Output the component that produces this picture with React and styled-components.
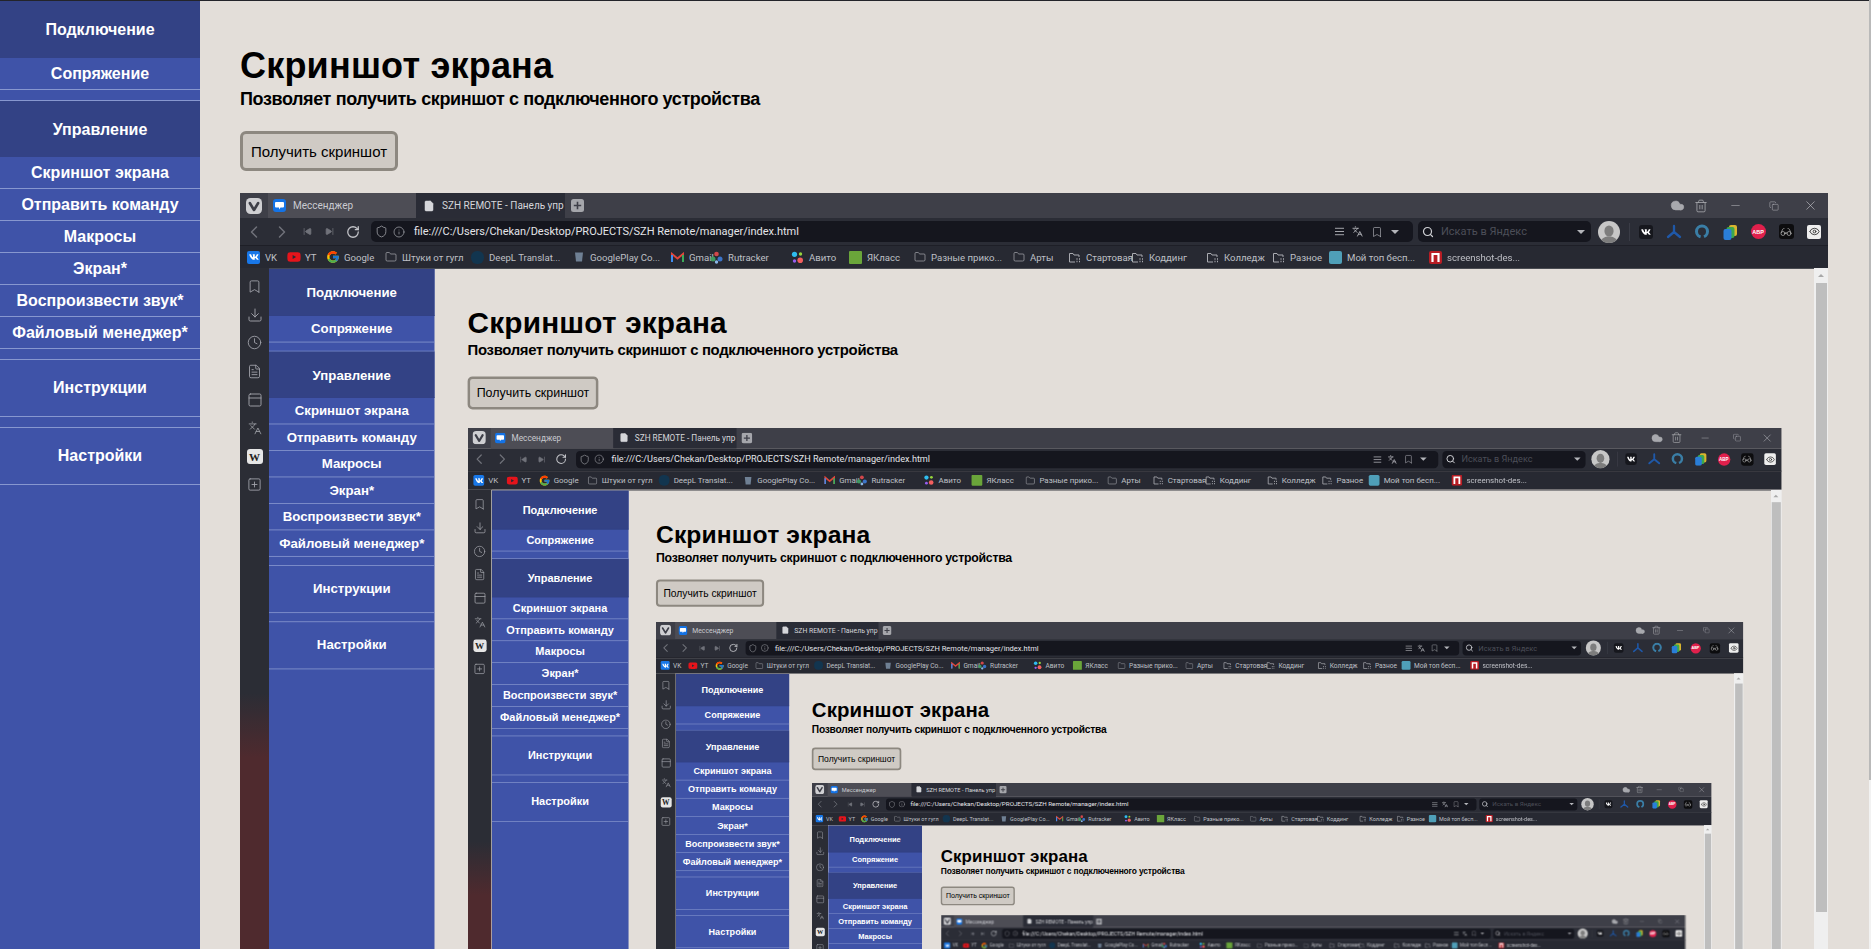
import React from 'react';
import styled, { createGlobalStyle } from 'styled-components';
import { Bookmark, Download, Clock, FileText, PanelTop, SquarePlus, Folder, Shield, Info, RotateCw, ChevronLeft, ChevronRight, SkipBack, SkipForward, Search, Cloud, Trash2, Minus, Copy, X, Eye, Glasses, AlignJustify, Languages, File } from 'lucide-react';
import { FaVk, FaYoutube } from 'react-icons/fa';
import { FcGoogle } from 'react-icons/fc';

const SCALE = 0.8275;
const MAX_DEPTH = 6;

const Global = createGlobalStyle`
  html, body { margin: 0; padding: 0; width: 100%; height: 100%; overflow: hidden; background: #e3ded9; }
  #root { width: 1871px; height: 949px; }
  * { box-sizing: border-box; }
  svg { flex: none; }
`;

const Screen = styled.div`
  display: flex;
  width: 1871px;
  height: 949px;
  overflow: hidden;
`;

const EdgeStrip = styled.div`
  flex: none;
  width: 2px;
  background: linear-gradient(#b9b9b9 780px, #f2f2f2 780px);
`;

const Page = styled.div`
  flex: none;
  display: flex;
  width: ${p => (p.$nested ? '1871px' : '1869px')};
  height: 949px;
  overflow: hidden;
  background: #e3ded9;
  border-top: 1px solid ${p => (p.$nested ? '#2b2d36' : '#23242a')};
  font-family: "Liberation Sans", Arial, sans-serif;
  transform: ${p => (p.$nested ? `scale(${SCALE})` : 'none')};
  transform-origin: 0 0;
`;

const Sidebar = styled.nav`
  flex: none;
  width: 200px;
  background: #3f53a8;
  display: flex;
  flex-direction: column;
`;

const NavItem = styled.div`
  flex: none;
  height: ${p => p.$h || 32}px;
  padding-top: ${p => (p.$dark ? 2 : 0)}px;
  display: flex;
  align-items: center;
  justify-content: center;
  font-size: 16px;
  font-weight: 700;
  color: #fff;
  white-space: nowrap;
  background: ${p => (p.$dark ? '#334285' : 'transparent')};
  border-bottom: 1px solid ${p => (p.$dark ? '#334285' : '#8797cf')};
`;

const NavGap = styled.div`
  flex: none;
  height: 11px;
  border-bottom: 1px solid #8797cf;
`;

const Main = styled.main`
  flex: 1;
  min-width: 0;
  padding: ${p => (p.$nested ? '43.5px' : '44px')} 0 0 40px;
  display: flex;
  flex-direction: column;
  align-items: flex-start;
`;

const Title = styled.h1`
  margin: 0 0 3px;
  font-size: 36px;
  line-height: 41px;
  font-weight: 700;
  letter-spacing: 0.2px;
  color: #000;
`;

const Subtitle = styled.h2`
  margin: 0 0 21px;
  font-size: 18px;
  line-height: 21px;
  font-weight: 700;
  letter-spacing: -0.39px;
  color: #000;
`;

const ActionButton = styled.button`
  flex: none;
  width: 158px;
  height: 40px;
  margin-bottom: 22px;
  padding: 0;
  border: 3px solid #8d8880;
  border-radius: 6px;
  background: #cfcac4;
  color: #000;
  font-family: "Liberation Sans", Arial, sans-serif;
  font-size: 15px;
`;

const Shot = styled.div`
  flex: none;
  width: 1588px;
  height: 805px;
  overflow: hidden;
  display: flex;
  flex-direction: column;
  filter: blur(${p => p.$blur}px);
  font-family: Roboto, "Noto Sans", sans-serif;
`;

const TabStrip = styled.div`
  flex: none;
  height: 25px;
  display: flex;
  align-items: stretch;
  background: #3e3f48;
`;

const Cell = styled.div`
  flex: none;
  width: ${p => p.$w}px;
  margin-left: ${p => p.$ml || 0}px;
  display: flex;
  align-items: center;
  justify-content: center;
  color: ${p => p.$color || '#8f9097'};
`;

const Tab = styled.div`
  flex: none;
  width: ${p => p.$w}px;
  display: flex;
  align-items: center;
  gap: 7px;
  padding-left: ${p => p.$pad}px;
  white-space: nowrap;
  font-size: 10px;
  color: ${p => (p.$active ? '#d5d6da' : '#c9cad0')};
  background: ${p => (p.$active ? '#2a2c36' : '#4d4d55')};
`;

const PushRight = styled.div`
  flex: 1;
`;

const AddressBar = styled.div`
  flex: none;
  height: 28px;
  display: flex;
  align-items: center;
  background: #2b2d36;
  border-bottom: 1px solid #1e1f27;
`;

const Field = styled.div`
  flex: none;
  width: ${p => p.$w}px;
  height: 21px;
  margin-left: 5px;
  border-radius: 5px;
  background: #15161e;
  display: flex;
  align-items: center;
  white-space: nowrap;
  color: #e4e5e9;
  font-size: 11px;
`;

const FieldIcon = styled.span`
  flex: none;
  width: ${p => p.$w}px;
  display: flex;
  align-items: center;
  justify-content: center;
  color: ${p => p.$color || '#b2b3b9'};
`;

const Url = styled.span`
  flex: 1;
`;

const Muted = styled.span`
  flex: 1;
  color: #4c4e58;
`;

const Caret = styled.span`
  width: 0;
  height: 0;
  border-left: 4px solid transparent;
  border-right: 4px solid transparent;
  border-top: 4px solid #b4b5ba;
`;

const Avatar = styled.div`
  flex: none;
  width: 22px;
  height: 22px;
  margin-left: 7px;
  border-radius: 50%;
  background: #c7c7c7;
  overflow: hidden;
  display: flex;
  align-items: flex-end;
  justify-content: center;
`;

const Rule = styled.div`
  flex: none;
  width: 1px;
  height: 18px;
  margin: 0 2px 0 9px;
  background: #3a3c46;
`;

const AbpBadge = styled.div`
  width: 15px;
  height: 15px;
  border-radius: 50%;
  background: #e0204c;
  color: #fff;
  font: 700 5.5px "Liberation Sans", sans-serif;
  display: flex;
  align-items: center;
  justify-content: center;
`;

const Square = styled.div`
  width: ${p => p.$size || 13}px;
  height: ${p => p.$size || 13}px;
  border-radius: ${p => p.$radius ?? 2}px;
  background: ${p => p.$bg};
  color: ${p => p.$fg || '#fff'};
  display: flex;
  align-items: center;
  justify-content: center;
`;

const BookmarkBar = styled.div`
  flex: none;
  height: 22px;
  display: flex;
  align-items: center;
  padding-left: 7px;
  background: #272932;
`;

const Mark = styled.div`
  flex: none;
  width: ${p => p.$w}px;
  display: flex;
  align-items: center;
  gap: 5px;
  white-space: nowrap;
  font-size: 9.6px;
  color: #bfc0c6;
`;

const MarkIcon = styled.span`
  flex: none;
  width: 13px;
  height: 13px;
  display: flex;
  align-items: center;
  justify-content: center;
  color: #a9aab0;
`;

const ShotBody = styled.div`
  flex: 1;
  min-height: 0;
  display: flex;
`;

const ToolPanel = styled.aside`
  flex: none;
  width: 29px;
  padding-top: 4px;
  display: flex;
  flex-direction: column;
  background: linear-gradient(#2b2d35 425px, #4f2a2e 490px);
  color: #a2a4ab;
`;

const ToolCell = styled.div`
  flex: none;
  height: 28.4px;
  display: flex;
  align-items: center;
  justify-content: center;
`;

const WikiBadge = styled.div`
  width: 16px;
  height: 15px;
  border-radius: 3px;
  background: #e6e6e6;
  color: #222;
  font: 700 11px "Liberation Serif", serif;
  display: flex;
  align-items: center;
  justify-content: center;
`;

const PageClip = styled.div`
  flex: 1;
  min-width: 0;
  overflow: hidden;
  background: #e3ded9;
`;

const Scrollbar = styled.div`
  flex: none;
  width: 14px;
  display: flex;
  flex-direction: column;
  align-items: center;
  background: #efefef;
`;

const ScrollArrow = styled.div`
  flex: none;
  height: 15px;
  display: flex;
  align-items: center;
  justify-content: center;
  &::before {
    content: "";
    border-left: 3px solid transparent;
    border-right: 3px solid transparent;
    border-bottom: 3px solid #a8a8a8;
  }
`;

const ScrollThumb = styled.div`
  flex: none;
  width: 11px;
  height: 629px;
  background: #bebebe;
`;

const Vivaldi = () => (
  <svg width="16" height="16" viewBox="0 0 16 16">
    <rect width="16" height="16" rx="4.5" fill="#cfcfd2" />
    <path d="M3.8 5 L8 12 L12.2 5" fill="none" stroke="#3e3f48" strokeWidth="2.6" strokeLinecap="round" strokeLinejoin="round" />
  </svg>
);

const Messenger = () => (
  <svg width="13" height="13" viewBox="0 0 13 13">
    <rect width="13" height="13" rx="3" fill="#1473e6" />
    <path d="M3 3h7a1 1 0 0 1 1 1v3.5a1 1 0 0 1-1 1H7.5L6 10.5V8.5H3a1 1 0 0 1-1-1V4a1 1 0 0 1 1-1z" fill="#fff" />
  </svg>
);

const AddTab = () => (
  <svg width="13" height="13" viewBox="0 0 13 13">
    <rect width="13" height="13" rx="2.5" fill="#a5a6ab" />
    <path d="M6.5 2.8v7.4M2.8 6.5h7.4" stroke="#3e3f48" strokeWidth="1.6" />
  </svg>
);

const Person = () => (
  <svg width="18" height="19" viewBox="0 0 18 19">
    <ellipse cx="9" cy="7" rx="4.6" ry="5.6" fill="#7d7d7d" />
    <path d="M0 19c1-5 5-6.5 9-6.5s8 1.500 9 6.500z" fill="#7d7d7d" />
  </svg>
);

const Gmail = () => (
  <svg width="13" height="11" viewBox="0 0 13 11">
    <path d="M1 10V2l5.500 4.500L12 2v8" fill="none" stroke="#e0463a" strokeWidth="2" />
    <path d="M1 10V3" stroke="#3f8cf0" strokeWidth="2" />
    <path d="M12 10V3" stroke="#3caa5a" strokeWidth="2" />
  </svg>
);

const Rutracker = () => (
  <svg width="13" height="13" viewBox="0 0 13 13">
    <circle cx="6.500" cy="3" r="2.300" fill="#d2474b" />
    <circle cx="3" cy="8" r="2.500" fill="#3e9a60" />
    <circle cx="10" cy="8" r="2.500" fill="#3b74c9" />
    <circle cx="6.500" cy="11" r="1.700" fill="#8ab8e8" />
  </svg>
);

const Avito = () => (
  <svg width="13" height="13" viewBox="0 0 13 13">
    <circle cx="3.500" cy="3.300" r="2.600" fill="#2fbdf0" />
    <circle cx="9.500" cy="3" r="1.700" fill="#95d43c" />
    <circle cx="9.200" cy="9.200" r="2.800" fill="#f35f5f" />
    <circle cx="3.500" cy="10" r="1.700" fill="#985ff0" />
  </svg>
);

const Play = () => (
  <svg width="12" height="12" viewBox="0 0 12 12">
    <path d="M2 1.500h8l-1 9H3z" fill="#6f8094" />
  </svg>
);

const BlueArrow = () => (
  <svg width="16" height="16" viewBox="0 0 16 16">
    <path d="M8 2v6M8 8l-6 5M8 8l6 5" stroke="#1f58a8" strokeWidth="2.300" fill="none" strokeLinecap="round" />
  </svg>
);

const TealRing = () => (
  <svg width="16" height="16" viewBox="0 0 16 16">
    <circle cx="8" cy="7.500" r="5.500" fill="none" stroke="#3a7ea6" strokeWidth="3" />
    <path d="M8 8l3 7H6z" fill="#2b2d36" />
  </svg>
);

const Cards = () => (
  <svg width="16" height="16" viewBox="0 0 16 16">
    <rect x="7" y="1" width="8" height="11" rx="2" fill="#d9b52f" />
    <rect x="4.500" y="3" width="8" height="11" rx="2" fill="#3ca84f" />
    <rect x="1.500" y="5" width="8" height="11" rx="2" fill="#2a7ed8" />
  </svg>
);

const GridFolder = () => (
  <svg width="13" height="13" viewBox="0 0 13 13" fill="none" stroke="#a9aab0" strokeWidth="1">
    <path d="M1.500 11V2.500h3.500l1 1.500h5v2M7 11H1.500" />
    <path d="M8.500 8h1M8.500 10.500h1M11 8h1M11 10.500h1" strokeWidth="1.500" />
  </svg>
);

const PocketMark = () => (
  <svg width="13" height="13" viewBox="0 0 13 13">
    <rect width="13" height="13" rx="2" fill="#b81d24" />
    <path d="M3.500 11V3h6v8" fill="none" stroke="#fff" strokeWidth="2.200" />
  </svg>
);

const FolderIcon = <Folder size={12} strokeWidth={1.4} />;
const GridIcon = <GridFolder />;

const BOOKMARKS = [
  { w: 40, icon: <Square $bg="#1877e8"><FaVk size={10} /></Square>, label: 'VK' },
  { w: 39, icon: <FaYoutube size={14} color="#e5141b" />, label: 'YT' },
  { w: 58, icon: <FcGoogle size={14} />, label: 'Google' },
  { w: 87, icon: FolderIcon, label: 'Штуки от гугл' },
  { w: 101, icon: <Square $bg="#12354f" $radius={6} />, label: 'DeepL Translat...' },
  { w: 99, icon: <Play />, label: 'GooglePlay Co...' },
  { w: 39, icon: <Gmail />, label: 'Gmail' },
  { w: 81, icon: <Rutracker />, label: 'Rutracker' },
  { w: 58, icon: <Avito />, label: 'Авито' },
  { w: 64, icon: <Square $bg="#6aa53a" $radius={1} />, label: 'ЯКласс' },
  { w: 99, icon: FolderIcon, label: 'Разные прико...' },
  { w: 56, icon: FolderIcon, label: 'Арты' },
  { w: 63, icon: GridIcon, label: 'Стартовая' },
  { w: 75, icon: GridIcon, label: 'Коддинг' },
  { w: 66, icon: GridIcon, label: 'Колледж' },
  { w: 57, icon: GridIcon, label: 'Разное' },
  { w: 100, icon: <Square $bg="#4f9fb8" />, label: 'Мой топ бесп...' },
  { w: 90, icon: <PocketMark />, label: 'screenshot-des...' },
];

const TOOLS = [
  <Bookmark size={15} strokeWidth={1.4} />,
  <Download size={16} strokeWidth={1.4} />,
  <Clock size={15} strokeWidth={1.4} />,
  <FileText size={15} strokeWidth={1.4} />,
  <PanelTop size={16} strokeWidth={1.4} />,
  <Languages size={14} strokeWidth={1.4} />,
  <WikiBadge>W</WikiBadge>,
  <SquarePlus size={15} strokeWidth={1.4} />,
];

const NAV = [
  { label: 'Подключение', h: 57, dark: true },
  { label: 'Сопряжение' },
  { gap: true },
  { label: 'Управление', h: 56, dark: true },
  { label: 'Скриншот экрана' },
  { label: 'Отправить команду' },
  { label: 'Макросы' },
  { label: 'Экран*' },
  { label: 'Воспроизвести звук*' },
  { label: 'Файловый менеджер*' },
  { gap: true },
  { label: 'Инструкции', h: 57 },
  { gap: true },
  { label: 'Настройки', h: 57 },
];

function BrowserChrome() {
  return (
    <>
      <TabStrip>
        <Cell $w={28}><Vivaldi /></Cell>
        <Tab $w={148} $pad={5}><Messenger />Мессенджер</Tab>
        <Tab $w={149} $pad={7} $active><File size={12} fill="#d5d6da" strokeWidth={1} />SZH REMOTE - Панель упр</Tab>
        <Cell $w={24}><AddTab /></Cell>
        <PushRight />
        <Cell $w={24} $color="#a8a9ae"><Cloud size={15} fill="#a8a9ae" strokeWidth={1} /></Cell>
        <Cell $w={23} $color="#a8a9ae"><Trash2 size={14} strokeWidth={1.4} /></Cell>
        <Cell $w={39} $ml={4} $color="#b8b9be"><Minus size={13} strokeWidth={1} /></Cell>
        <Cell $w={37} $color="#b8b9be"><Copy size={10} strokeWidth={1.2} /></Cell>
        <Cell $w={36} $color="#c5c6ca"><X size={15} strokeWidth={1} /></Cell>
      </TabStrip>
      <AddressBar>
        <Cell $w={28} $color="#70727a"><ChevronLeft size={20} strokeWidth={1.8} /></Cell>
        <Cell $w={28} $color="#70727a"><ChevronRight size={20} strokeWidth={1.8} /></Cell>
        <Cell $w={22} $color="#70727a"><SkipBack size={9} fill="#70727a" /></Cell>
        <Cell $w={22} $color="#70727a"><SkipForward size={9} fill="#70727a" /></Cell>
        <Cell $w={26} $color="#c2c3c8"><RotateCw size={14} strokeWidth={2.2} /></Cell>
        <Field $w={1042}>
          <FieldIcon $w={20}><Shield size={13} strokeWidth={1.3} /></FieldIcon>
          <FieldIcon $w={16}><Info size={12} strokeWidth={1.3} /></FieldIcon>
          <FieldIcon $w={7} />
          <Url>file:///C:/Users/Chekan/Desktop/PROJECTS/SZH Remote/manager/index.html</Url>
          <FieldIcon $w={18}><AlignJustify size={11} /></FieldIcon>
          <FieldIcon $w={19}><Languages size={11} /></FieldIcon>
          <FieldIcon $w={19}><Bookmark size={12} strokeWidth={1.3} /></FieldIcon>
          <FieldIcon $w={18}><Caret /></FieldIcon>
          <FieldIcon $w={9} />
        </Field>
        <Field $w={173}>
          <FieldIcon $w={20} $color="#d0d1d5"><Search size={12} strokeWidth={2.4} /></FieldIcon>
          <FieldIcon $w={3} />
          <Muted>Искать в Яндекс</Muted>
          <FieldIcon $w={20}><Caret /></FieldIcon>
        </Field>
        <Avatar><Person /></Avatar>
        <Rule />
        <Cell $w={28}><Square $size={14} $bg="#16171d" $radius={3}><FaVk size={10} /></Square></Cell>
        <Cell $w={28}><BlueArrow /></Cell>
        <Cell $w={28}><TealRing /></Cell>
        <Cell $w={28}><Cards /></Cell>
        <Cell $w={28}><AbpBadge>ABP</AbpBadge></Cell>
        <Cell $w={28}><Square $size={15} $bg="#0c0c0e" $fg="#c3c3c3" $radius={3}><Glasses size={12} strokeWidth={1.3} /></Square></Cell>
        <Cell $w={28}><Square $size={14} $bg="#eeeeee" $fg="#333" $radius={2}><Eye size={11} strokeWidth={2} /></Square></Cell>
      </AddressBar>
      <BookmarkBar>
        {BOOKMARKS.map(b => (
          <Mark key={b.label} $w={b.w}>
            <MarkIcon>{b.icon}</MarkIcon>
            {b.label}
          </Mark>
        ))}
      </BookmarkBar>
    </>
  );
}

function ControlPage({ depth }) {
  return (
    <Page $nested={depth > 0}>
      <Sidebar>
        {NAV.map((n, i) =>
          n.gap ? (
            <NavGap key={i} />
          ) : (
            <NavItem key={i} $h={n.h} $dark={n.dark}>{n.label}</NavItem>
          )
        )}
      </Sidebar>
      <Main $nested={depth > 0}>
        <Title>Скриншот экрана</Title>
        <Subtitle>Позволяет получить скриншот с подключенного устройства</Subtitle>
        <ActionButton>Получить скриншот</ActionButton>
        {depth < MAX_DEPTH && (
          <Shot $blur={0.55 + depth * 0.15}>
            <BrowserChrome />
            <ShotBody>
              <ToolPanel>
                {TOOLS.map((t, i) => (
                  <ToolCell key={i}>{t}</ToolCell>
                ))}
              </ToolPanel>
              <PageClip>
                <ControlPage depth={depth + 1} />
              </PageClip>
              <Scrollbar>
                <ScrollArrow />
                <ScrollThumb />
              </Scrollbar>
            </ShotBody>
          </Shot>
        )}
      </Main>
    </Page>
  );
}

export default function App() {
  return (
    <>
      <Global />
      <Screen>
        <ControlPage depth={0} />
        <EdgeStrip />
      </Screen>
    </>
  );
}
